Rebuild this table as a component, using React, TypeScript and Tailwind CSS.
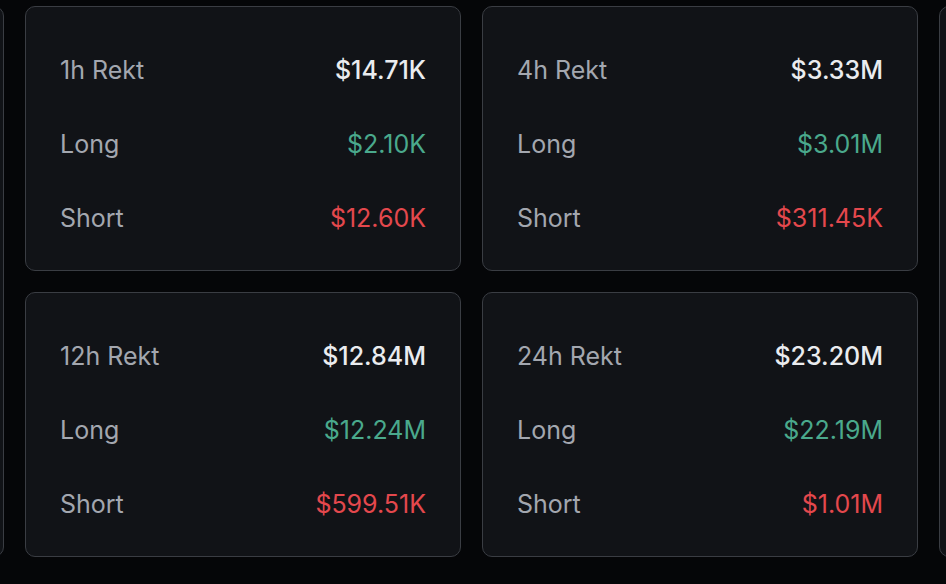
import React from 'react';

type Stat = { label: string; total: string; long: string; short: string };

const stats: Stat[] = [
  { label: '1h Rekt', total: '$14.71K', long: '$2.10K', short: '$12.60K' },
  { label: '4h Rekt', total: '$3.33M', long: '$3.01M', short: '$311.45K' },
  { label: '12h Rekt', total: '$12.84M', long: '$12.24M', short: '$599.51K' },
  { label: '24h Rekt', total: '$23.20M', long: '$22.19M', short: '$1.01M' },
];

const Row: React.FC<{ label: string; value: string; valueClass: string }> = ({ label, value, valueClass }) => (
  <div className="flex items-center justify-between h-[32px]">
    <span className="text-[#a3a7af]">{label}</span>
    <span className={valueClass}>{value}</span>
  </div>
);

const RektCard: React.FC<{ stat: Stat }> = ({ stat }) => (
  <div className="h-[265px] rounded-[10px] border border-[#3a3d43] bg-[#111317] px-[34px] pt-[48px] flex flex-col gap-[42px]">
    <Row label={stat.label} value={stat.total} valueClass="text-[#eaecef] font-medium" />
    <Row label="Long" value={stat.long} valueClass="text-[#4aa98c]" />
    <Row label="Short" value={stat.short} valueClass="text-[#e4484d]" />
  </div>
);

export default function App() {
  return (
    <div
      className="w-[946px] h-[584px] overflow-hidden bg-[#050608] text-[25px]"
      style={{ fontFamily: 'Inter, "Noto Sans", sans-serif' }}
    >
      <div className="flex gap-[21px] py-[6px] -ml-[432px]">
        {/* previous card, scrolled out */}
        <div className="w-[436px] h-[551px] shrink-0 rounded-[10px] border border-[#3a3d43] bg-[#111317]" />

        <div className="grid grid-cols-[436px_436px] gap-x-[21px] gap-y-[21px] shrink-0">
          {stats.map((s) => (
            <RektCard key={s.label} stat={s} />
          ))}
        </div>

        {/* next card, mostly hidden */}
        <div className="w-[436px] h-[551px] shrink-0 rounded-[10px] border border-[#3a3d43] bg-[#111317]" />
      </div>
    </div>
  );
}
